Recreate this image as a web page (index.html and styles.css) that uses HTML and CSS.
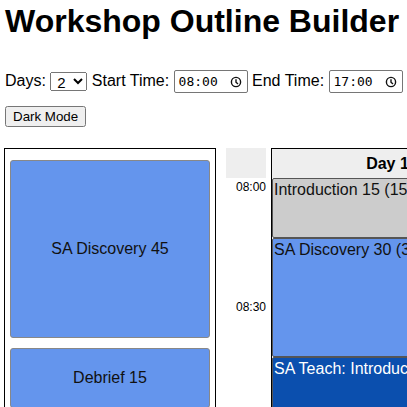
FILE: index.html
```html
<!DOCTYPE html>
<html>
<head>
<meta charset="utf-8">
<link rel="stylesheet" href="styles.css">
</head>
<body>
<h1 class="title">Workshop Outline Builder</h1>
<div class="controls">
  <label>Days: <select class="days"><option>1</option><option selected>2</option><option>3</option></select></label>
  <label>Start Time: <span class="time-field"><span class="time-text">08:00</span><svg class="clock" viewBox="0 0 12 12" width="12" height="12"><circle cx="6" cy="6" r="4.6" fill="none" stroke="#111" stroke-width="1.4"/><path d="M6 3.2V6.2L8 8.1" fill="none" stroke="#111" stroke-width="1.4"/></svg></span></label>
  <label>End Time: <span class="time-field"><span class="time-text">17:00</span><svg class="clock" viewBox="0 0 12 12" width="12" height="12"><circle cx="6" cy="6" r="4.6" fill="none" stroke="#111" stroke-width="1.4"/><path d="M6 3.2V6.2L8 8.1" fill="none" stroke="#111" stroke-width="1.4"/></svg></span></label>
</div>
<div class="mode-row"><button class="mode-btn">Dark Mode</button></div>
<div class="workspace">
  <div class="palette">
    <div class="chip" style="height:178px">SA Discovery 45</div>
    <div class="chip" style="height:60px">Debrief 15</div>
  </div>
  <div class="times">
    <div class="times-head"></div>
    <div class="slot">08:00</div>
    <div class="slot">08:30</div>
  </div>
  <div class="day">
    <div class="day-head">Day 1</div>
    <div class="session intro" style="height:60px">Introduction 15 (15 min)</div>
    <div class="session discovery" style="height:119px">SA Discovery 30 (30 min)</div>
    <div class="session teach" style="height:120px">SA Teach: Introduction (30 min)</div>
  </div>
</div>
</body>
</html>
```
FILE: styles.css
```css
body {
  margin: 0;
  padding: 0 4px;
  font-family: "Liberation Sans", Arial, sans-serif;
  overflow: hidden;
}
.title {
  font-size: 32px;
  margin: 3px 0 0 1px;
  white-space: nowrap;
}
.controls {
  margin: 29px 0 0 1px;
  font-size: 16px;
  white-space: nowrap;
  line-height: 23px;
}
.days {
  font-family: "Liberation Sans", Arial, sans-serif;
  font-size: 15px;
  width: 37px;
  height: 19px;
  padding: 0 0 0 2px;
  vertical-align: middle;
}
.time-field {
  display: inline-flex;
  align-items: center;
  justify-content: space-between;
  box-sizing: border-box;
  width: 74px;
  height: 23px;
  padding: 0 5px 0 4px;
  border: 1px solid #767676;
  border-radius: 2px;
  vertical-align: middle;
  background: #fff;
}
.time-text {
  font-family: "DejaVu Sans Mono", monospace;
  font-size: 13px;
  color: #000;
  line-height: 1;
}
.clock {
  display: block;
}
.mode-row {
  margin: 13px 0 0 1px;
}
.workspace {
  display: flex;
  align-items: flex-start;
  margin-top: 21px;
}
.palette {
  width: 200px;
  height: 300px;
  border: 1px solid #000;
  padding: 11px 5px 0 5px;
  display: flex;
  flex-direction: column;
  gap: 10px;
  flex-shrink: 0;
}
.chip {
  box-sizing: border-box;
  background: #6495ed;
  border: 1px solid #888;
  border-radius: 3px;
  display: flex;
  align-items: center;
  justify-content: center;
  font-size: 16px;
  color: #111;
  flex-shrink: 0;
}
.times {
  width: 40px;
  margin-left: 10px;
  flex-shrink: 0;
  font-size: 12px;
  text-align: right;
}
.times-head {
  height: 30px;
  background: #eee;
}
.slot {
  height: 118px;
  padding-top: 2px;
}
.day {
  width: 231px;
  margin-left: 5px;
  border: 1px solid #000;
  flex-shrink: 0;
}
.day-head {
  height: 29px;
  background: #eee;
  font-weight: bold;
  display: flex;
  align-items: center;
  justify-content: center;
}
.session {
  box-sizing: border-box;
  border: 1px solid #555;
  border-radius: 2px;
  padding: 2px 1px 0 1px;
  font-size: 16px;
  white-space: nowrap;
  overflow: hidden;
}
.intro { background: #ccc; color: #111; }
.discovery { background: #6495ed; color: #111; }
.teach { background: #0b4fae; color: #fff; }
```
